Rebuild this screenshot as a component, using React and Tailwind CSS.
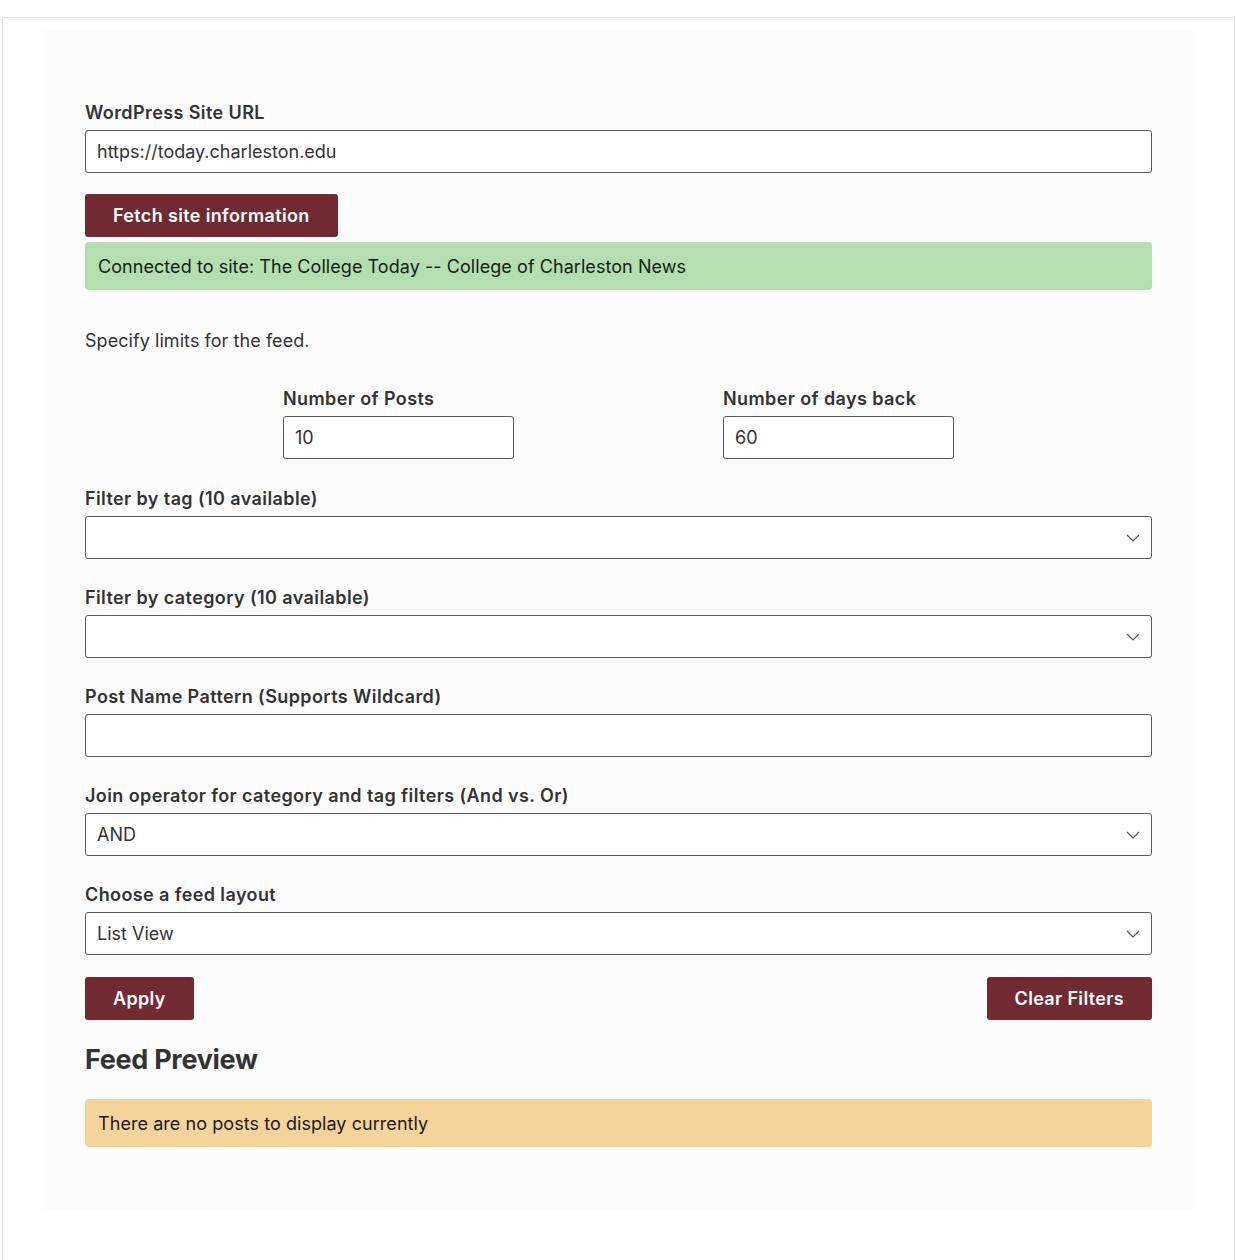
import React, { useState } from "react";

const font = { fontFamily: "Inter, 'Noto Sans', sans-serif" };

function Chevron() {
  return (
    <svg
      width="14"
      height="8"
      viewBox="0 0 14 8"
      className="pointer-events-none absolute right-[12px] top-1/2 -translate-y-1/2"
    >
      <path d="M1 1l6 6 6-6" fill="none" stroke="#555" strokeWidth="1.2" />
    </svg>
  );
}

function Field({ label, children }) {
  return (
    <div className="flex flex-col">
      <label className="text-[18px] font-semibold text-[#333] leading-[24px] tracking-[0.4px] mb-[5px]">
        {label}
      </label>
      {children}
    </div>
  );
}

function Select({ value, onChange, options }) {
  return (
    <div className="relative">
      <select
        value={value}
        onChange={(e) => onChange(e.target.value)}
        className="appearance-none w-full h-[43px] border border-[#5a5a5a] rounded-[3px] bg-white px-[11px] text-[18px] text-[#333] outline-none"
      >
        {options.map((o) => (
          <option key={o} value={o}>
            {o}
          </option>
        ))}
      </select>
      <Chevron />
    </div>
  );
}

const inputCls =
  "w-full h-[43px] border border-[#5a5a5a] rounded-[3px] bg-white px-[11px] text-[18px] text-[#333] outline-none";

const btnCls =
  "h-[43px] px-[28px] bg-[#722a32] text-white text-[18px] font-semibold tracking-[0.35px] rounded-[3px]";

export default function App() {
  const [url, setUrl] = useState("https://today.charleston.edu");
  const [posts, setPosts] = useState("10");
  const [days, setDays] = useState("60");
  const [tag, setTag] = useState("");
  const [category, setCategory] = useState("");
  const [pattern, setPattern] = useState("");
  const [join, setJoin] = useState("AND");
  const [layout, setLayout] = useState("List View");

  return (
    <div className="bg-white min-h-[1260px] pt-[17px] pl-[2px] pr-[1px]" style={font}>
      <div className="border border-b-0 border-[#e3e3e3] min-h-[1243px] pl-[40px] pt-[12px] pr-[40px]">
        <div className="bg-[#fcfcfc] pl-[42px] pr-[42px] pt-[71px] pb-[63px]">
          {/* Site URL */}
          <Field label="WordPress Site URL">
            <input
              className={inputCls}
              value={url}
              onChange={(e) => setUrl(e.target.value)}
            />
          </Field>

          <button className={`mt-[21px] ${btnCls}`}>Fetch site information</button>

          <div className="mt-[5px] h-[48px] flex items-center px-[13px] bg-[#b3dfb0] rounded-[4px] text-[18px] tracking-[0.06px] text-[#1a1a1a]">
            Connected to site: The College Today -- College of Charleston News
          </div>

          <p className="mt-[39px] text-[18px] text-[#333] leading-[24px] tracking-[0.06px]">
            Specify limits for the feed.
          </p>

          {/* Limits */}
          <div className="mt-[34px] flex pl-[198px]">
            <div className="w-[440px]">
              <div className="w-[231px]">
                <Field label="Number of Posts">
                  <input
                    className={inputCls}
                    value={posts}
                    onChange={(e) => setPosts(e.target.value)}
                  />
                </Field>
              </div>
            </div>
            <div className="w-[231px]">
              <Field label="Number of days back">
                <input
                  className={inputCls}
                  value={days}
                  onChange={(e) => setDays(e.target.value)}
                />
              </Field>
            </div>
          </div>

          <div className="mt-[28px] flex flex-col gap-[27px]">
            <Field label="Filter by tag (10 available)">
              <Select value={tag} onChange={setTag} options={[""]} />
            </Field>
            <Field label="Filter by category (10 available)">
              <Select value={category} onChange={setCategory} options={[""]} />
            </Field>
            <Field label="Post Name Pattern (Supports Wildcard)">
              <input
                className={inputCls}
                value={pattern}
                onChange={(e) => setPattern(e.target.value)}
              />
            </Field>
            <Field label="Join operator for category and tag filters (And vs. Or)">
              <Select value={join} onChange={setJoin} options={["AND", "OR"]} />
            </Field>
            <Field label="Choose a feed layout">
              <Select
                value={layout}
                onChange={setLayout}
                options={["List View", "Grid View"]}
              />
            </Field>
          </div>

          <div className="mt-[22px] flex justify-between">
            <button className={btnCls}>Apply</button>
            <button className={btnCls}>Clear Filters</button>
          </div>

          <h2 className="mt-[22px] text-[27px] font-bold text-[#333] leading-[36px] tracking-[-0.3px]">
            Feed Preview
          </h2>

          <div className="mt-[21px] h-[48px] flex items-center px-[13px] bg-[#f4d49b] rounded-[4px] text-[18px] tracking-[0.06px] text-[#1a1a1a]">
            There are no posts to display currently
          </div>
        </div>
      </div>
    </div>
  );
}
